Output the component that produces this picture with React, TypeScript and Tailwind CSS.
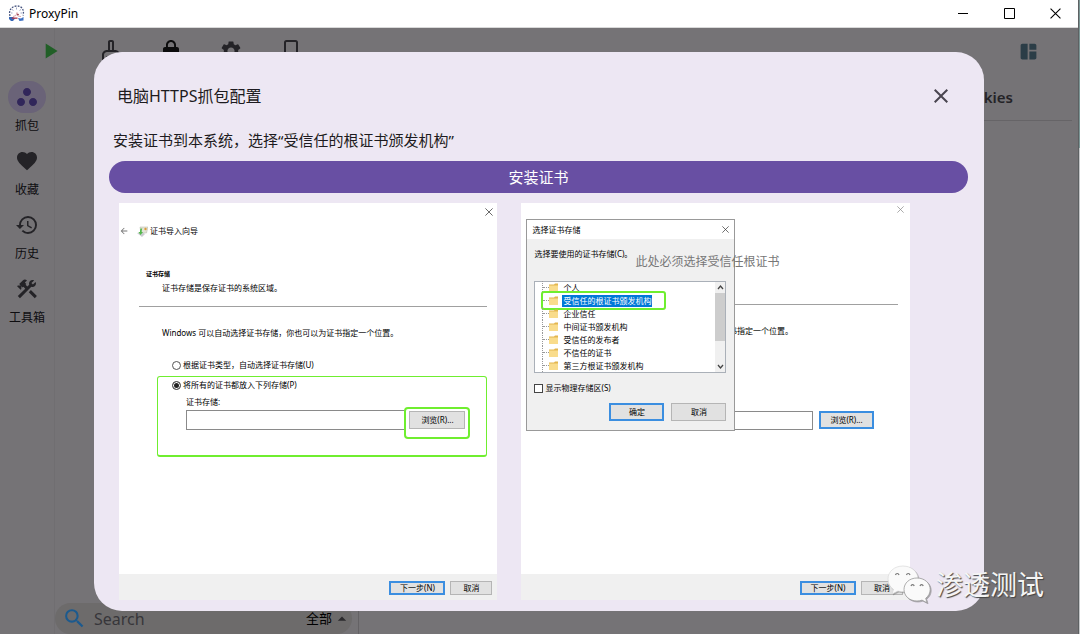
import type { ButtonHTMLAttributes, ReactNode } from "react";
import {
  MdArrowBack,
  MdArrowDropUp,
  MdClose,
  MdConstruction,
  MdFavorite,
  MdHistory,
  MdLock,
  MdOutlineCleaningServices,
  MdPlayArrow,
  MdSearch,
  MdSettings,
  MdSpaceDashboard,
  MdWorkspaces,
} from "react-icons/md";

const navItems = [
  { label: "抓包", icon: MdWorkspaces, active: true },
  { label: "收藏", icon: MdFavorite, active: false },
  { label: "历史", icon: MdHistory, active: false },
  { label: "工具箱", icon: MdConstruction, active: false },
];

const stores = [
  "个人",
  "受信任的根证书颁发机构",
  "企业信任",
  "中间证书颁发机构",
  "受信任的发布者",
  "不信任的证书",
  "第三方根证书颁发机构",
];

export default function App() {
  return (
    <div className="relative flex h-screen overflow-hidden bg-[#757376] font-['Noto_Sans','Noto_Sans_CJK_SC',sans-serif] text-[#1d1b20]">
      <div className="flex min-w-0 flex-1 flex-col">
        <TitleBar />
        <div className="relative flex min-h-0 flex-1">
          <Sidebar />
          <Workspace />
          <div className="absolute inset-0 px-[94px] pt-6">
            <CertDialog />
          </div>
        </div>
      </div>
      {/* Desktop showing past the window edge */}
      <div className="w-0.5 border-l border-[#5e6163] bg-[#c4c6c8]">
        <div className="h-[148px] bg-[#7c9796]" />
      </div>
      <Watermark />
    </div>
  );
}

function TitleBar() {
  return (
    <header className="flex h-7 shrink-0 items-center border-b border-[#d9d9d9] bg-white pl-2">
      <AppLogo />
      <span className="ml-1 flex-1 text-xs leading-[18px] text-black">ProxyPin</span>
      <button aria-label="Minimize" className="flex h-full w-[46px] items-center justify-center">
        <svg width="11" height="11" stroke="#000"><path d="M0 5.5h10" /></svg>
      </button>
      <button aria-label="Maximize" className="flex h-full w-[46px] items-center justify-center">
        <svg width="11" height="11" stroke="#000" fill="none"><path d="M.5.5h10v10H.5z" /></svg>
      </button>
      <button aria-label="Close" className="flex h-full w-[46px] items-center justify-center">
        <ThinCross size={11} color="#000" />
      </button>
    </header>
  );
}

function AppLogo() {
  return (
    <svg width="17" height="17" viewBox="0 0 17 17" fill="none">
      <path d="M2 11C.5 6 3 1.300 8.500 1s8 4 6.500 9.500" stroke="#46547f" strokeWidth="1.300" strokeDasharray="1.800 1.200" />
      <path d="M4 4.500l1.500 1M8.500 2.500v2M13 4.500l-1.500 1M3 8h1.500M12.500 8H14" stroke="#a3abc8" />
      <path d="M5 11.500l3-1 1-3 .8 3.500 3.200.5" stroke="#dba9af" />
      <circle cx="10" cy="9.500" r=".8" fill="#8b2331" />
      <path d="M1 12h4l2 1.500-2 2.500H3L1 14z" fill="#3565b5" />
      <path d="M10 13l3 .5 2.500-1.500v3.500l-4 .5z" fill="#3b6fc2" />
      <path d="M4 12.500h5.500v1.300H4z" fill="#b03548" />
    </svg>
  );
}

function Sidebar() {
  return (
    <nav className="flex w-[55px] shrink-0 flex-col items-center gap-2.5 border-r border-[#706e71] pt-[53px]">
      {navItems.map(({ label, icon: Icon, active }) => (
        <button key={label} className="flex flex-col items-center gap-[3px]">
          <span
            className={`flex h-8 w-[38px] items-center justify-center rounded-full ${
              active ? "bg-[#6a6378] text-[#31265a]" : "text-[#242327]"
            }`}
          >
            <Icon size={24} />
          </span>
          <span className="text-xs leading-[19px] text-[#0e0d10]">{label}</span>
        </button>
      ))}
    </nav>
  );
}

function Workspace() {
  return (
    <div className="flex min-w-0 flex-1 flex-col text-[#242327]">
      <div className="flex h-[46px] items-center justify-between pr-[39px]">
        <div className="-ml-[18px] flex items-center gap-9">
          <button aria-label="Start" className="text-[#215f27]"><MdPlayArrow size={26} /></button>
          <button aria-label="Clear"><MdOutlineCleaningServices size={24} /></button>
          <button aria-label="SSL" className="text-[#0c0c0d]"><MdLock size={24} /></button>
          <button aria-label="Settings"><MdSettings size={24} /></button>
          <button aria-label="Phone">
            <svg width="24" height="24" fill="none" stroke="currentColor" strokeWidth="2"><rect x="6" y="2" width="12" height="20" rx="1.500" /></svg>
          </button>
        </div>
        <button aria-label="Layout" className="text-[#2b3d47]"><MdSpaceDashboard size={21} /></button>
      </div>
      <div className="flex min-h-0 flex-1">
        <div className="flex w-[304px] flex-col justify-end border-r border-[#646265]">
          <div className="mr-1.5 flex h-[31px] items-center rounded-full bg-[#6d6b6b] pl-[7px]">
            <MdSearch size={25} className="text-[#1c5a8e]" />
            <input
              aria-label="Search"
              placeholder="Search"
              className="ml-[7px] min-w-0 flex-1 bg-transparent text-base outline-none placeholder:text-[#37363a]"
            />
            <button className="flex items-center text-[13px] text-black">
              全部
              <MdArrowDropUp size={20} className="text-[#2b2a2d]" />
            </button>
          </div>
        </div>
        <div className="flex-1 pr-1.5">
          <div className="flex h-[47px] items-center justify-end border-b border-[#666467] pr-[59px]">
            <button className="text-[15px] font-semibold">Cookies</button>
          </div>
        </div>
      </div>
    </div>
  );
}

function CertDialog() {
  return (
    <section role="dialog" aria-label="电脑HTTPS抓包配置" className="rounded-[28px] bg-[#ede7f3] pt-6 pr-4 pb-[11px] pl-[15px]">
      <div className="flex h-10 items-center justify-between pr-[15px] pl-2">
        <h1 className="text-base">电脑HTTPS抓包配置</h1>
        <button aria-label="关闭" className="text-[#49454f]"><MdClose size={24} /></button>
      </div>
      <p className="mt-3 pl-1 text-[15px] leading-6">安装证书到本系统，选择“受信任的根证书颁发机构”</p>
      <button className="mt-[9px] h-8 w-full rounded-full bg-[#684fa3] text-[15px] text-white">安装证书</button>
      <div className="mt-2.5 grid min-h-[397px] grid-cols-[378fr_388fr] gap-6 pr-[58px] pl-2.5 text-[8px] leading-[14px] text-black">
        <ImportWizard />
        <StorePicker />
      </div>
    </section>
  );
}

function ImportWizard() {
  return (
    <div className="flex flex-col bg-white">
      <div className="flex h-[18px] items-center justify-end pr-1">
        <button aria-label="关闭向导"><ThinCross size={8} color="#444" /></button>
      </div>
      <div className="flex h-5 items-center">
        <MdArrowBack size={10} className="text-[#777]" />
        <WizardIcon />
        <span className="ml-0.5">证书导入向导</span>
      </div>
      <h2 className="mt-[26px] pl-[27px] text-[6px] leading-[14px] font-bold">证书存储</h2>
      <p className="pl-[43px]">证书存储是保存证书的系统区域。</p>
      <hr className="mt-[11px] mr-2.5 ml-5 border-[#a0a0a0]" />
      <p className="mt-[19px] pl-[43px]">Windows 可以自动选择证书存储，你也可以为证书指定一个位置。</p>
      <label className="mt-[18px] flex items-center gap-0.5 pl-[53px]">
        <WinRadio />
        根据证书类型，自动选择证书存储(U)
      </label>
      <div className="mt-1 mr-2.5 ml-[38px] h-[81px] rounded-[3px] border border-b-2 border-[#6fee2f] pt-px pr-4 pl-3.5">
        <label className="flex items-center gap-0.5">
          <WinRadio defaultChecked />
          将所有的证书都放入下列存储(P)
        </label>
        <label htmlFor="store" className="mt-1 block pl-3.5 leading-[11px]">证书存储:</label>
        <div className="flex items-start pl-3.5">
          <input id="store" className="mt-[3px] h-5 min-w-0 flex-1 border border-r-0 border-[#8a8a8a] px-1 outline-none" />
          <div className="rounded-[4px] border-2 border-[#6fee2f] px-[3px] pt-0.5 pb-2">
            <WinButton className="h-[18px] w-14">浏览(R)...</WinButton>
          </div>
        </div>
      </div>
      <WizardFooter className="pr-[5px]" />
    </div>
  );
}

function StorePicker() {
  return (
    <div className="relative flex flex-col bg-white">
      <div className="flex h-[13px] items-center justify-end pr-1.5">
        <button aria-label="关闭向导"><ThinCross size={7} color="#888" /></button>
      </div>
      <hr className="mt-[88px] mr-3 ml-5 border-[#a0a0a0]" />
      <p className="mt-[19px] pr-[117px] text-right">你也可以为证书指定一个位置。</p>
      <div className="mt-[73px] flex gap-1.5 pr-9 pl-[66px]">
        <input aria-label="证书存储" className="h-[19px] min-w-0 flex-1 border border-[#8a8a8a] px-1 outline-none" />
        <WinButton focused className="h-[18px] w-[55px]">浏览(R)...</WinButton>
      </div>
      <WizardFooter className="pr-[7px]" />

      {/* Store selection dialog */}
      <div className="absolute top-4 left-[5px] h-[212px] w-[209px] border border-[#999] bg-[#f0f0f0]">
        <div className="flex h-[19px] items-center justify-between bg-white px-[5px]">
          <span>选择证书存储</span>
          <button aria-label="关闭"><ThinCross size={7} color="#333" /></button>
        </div>
        <p className="mt-2 pl-[7px]">选择要使用的证书存储(C)。</p>
        <div className="mt-5 mr-2 ml-[7px] flex h-[92px] border border-[#aab0b8] bg-white">
          <ul className="-mt-px flex-1 pl-[7px]">
            {stores.map((name, i) => (
              <li key={name} className="relative flex h-[13px] items-center border-l border-dotted border-[#999]">
                <span className="w-1.5 border-t border-dotted border-[#999]" />
                <FolderIcon />
                <span className={`ml-1 px-px leading-3 ${i === 1 ? "bg-[#0078d7] text-white" : ""}`}>{name}</span>
                {i === 1 && <span className="absolute -top-[3px] -left-0.5 h-[19px] w-[125px] rounded-[3px] border-2 border-[#6fee2f]" />}
              </li>
            ))}
          </ul>
          <div className="flex w-2.5 flex-col items-center bg-[#f0f0f0] py-0.5">
            <Chevron d="M1 5l2.500-3L6 5" />
            <div className="my-0.5 h-12 w-full bg-[#cdcdcd]" />
            <span className="mt-auto"><Chevron d="M1 2l2.500 3L6 2" /></span>
          </div>
        </div>
        <label className="mt-2 flex items-center gap-0.5 pl-[7px]">
          <input type="checkbox" className="size-[9px] appearance-none border border-[#444] bg-white checked:bg-[#0078d7]" />
          显示物理存储区(S)
        </label>
        <div className="mt-2 flex justify-end gap-[7px] pr-2">
          <WinButton focused className="h-[18px] w-[55px]">确定</WinButton>
          <WinButton className="h-[18px] w-[55px]">取消</WinButton>
        </div>
      </div>
      <p className="absolute top-[50px] left-[114px] text-xs leading-[18px] whitespace-nowrap text-[#777]">此处必须选择受信任根证书</p>
    </div>
  );
}

function WizardFooter({ className }: { className: string }) {
  return (
    <div className={`mt-auto flex h-[26px] items-center justify-end gap-[5px] bg-[#f0f0f0] pt-0.5 ${className}`}>
      <WinButton focused className="h-3.5 w-14">下一步(N)</WinButton>
      <WinButton className="h-3.5 w-[42px]">取消</WinButton>
    </div>
  );
}

interface WinButtonProps extends ButtonHTMLAttributes<HTMLButtonElement> {
  focused?: boolean;
  children: ReactNode;
}

function WinButton({ focused, className, children, ...props }: WinButtonProps) {
  return (
    <button
      {...props}
      className={`flex items-center justify-center bg-[#e1e1e1] ${
        focused ? "border-2 border-[#3b8ee0]" : "border border-[#b5b5b5]"
      } ${className ?? ""}`}
    >
      {children}
    </button>
  );
}

function WinRadio({ defaultChecked }: { defaultChecked?: boolean }) {
  return (
    <input
      type="radio"
      name="store-mode"
      defaultChecked={defaultChecked}
      className="size-[9px] appearance-none rounded-full border border-[#555] bg-white checked:bg-[#222] checked:shadow-[inset_0_0_0_1px_white]"
    />
  );
}

function ThinCross({ size, color }: { size: number; color: string }) {
  return (
    <svg width={size} height={size} viewBox="0 0 10 10" stroke={color}><path d="M.5.5l9 9M9.500.5l-9 9" /></svg>
  );
}

function Chevron({ d }: { d: string }) {
  return <svg width="7" height="7" fill="none" stroke="#444" strokeWidth="1.300"><path d={d} /></svg>;
}

function FolderIcon() {
  return (
    <svg width="9" height="9" viewBox="0 0 9 9">
      <path d="M0 1.500h5L6 .5h3V9H0z" fill="#e3b64e" />
      <path d="M0 2.500h9V9H0z" fill="#f9dc8c" />
    </svg>
  );
}

function WizardIcon() {
  return (
    <svg width="11" height="11" viewBox="0 0 11 11" className="ml-2">
      <path d="M3 1h8L9.500 7H4z" fill="#e3e3d8" stroke="#b5b5a5" strokeWidth=".5" />
      <path d="M0 7l5-1 3 2-3 3z" fill="#c9ccd0" />
      <path d="M3.500 2.500C3 4 3 5 3 6H1.500L3.500 9 6 6H4.700c0-1 0-2 .6-3.500z" fill="#52b84b" />
      <circle cx="8.500" cy="3" r="1.200" fill="#d99a3c" />
    </svg>
  );
}

function Watermark() {
  return (
    <div className="pointer-events-none absolute right-9 bottom-[30px] flex items-center gap-1">
      <svg width="45" height="39" viewBox="0 0 45 39" fill="none" className="drop-shadow-[1px_1px_0_#77777799]">
        <path d="M16 1C7.500 1 1 6.500 1 14c0 4.500 2 8 5.500 10.500L5 29l6-3c1.500.5 3 .8 5 .8 8.500 0 15-5.500 15-12.800S24.500 1 16 1z" fill="#fafafa" stroke="#d5d5d5" strokeWidth=".6" />
        <path d="M30 13c-7.500 0-13 5-13 11.500S22.500 36 30 36c1.800 0 3.500-.3 5-.9l5 2.700-1.300-4.500c2.800-2.200 4.500-5.300 4.500-8.800C43.200 18 37.500 13 30 13z" fill="#fafafa" stroke="#9b9b9b" strokeWidth=".8" />
        <path d="M8.500 10c.5-2 3-2 3.500 0M19.500 10c.5-2 3-2 3.500 0M24 21c.5-1.800 2.700-1.800 3.200 0M33 21c.5-1.800 2.700-1.800 3.200 0" stroke="#777" strokeWidth="1.200" />
      </svg>
      <span className="text-[27px] leading-9 text-[#f5f5f5] [text-shadow:1px_1px_1px_#444]">渗透测试</span>
    </div>
  );
}
